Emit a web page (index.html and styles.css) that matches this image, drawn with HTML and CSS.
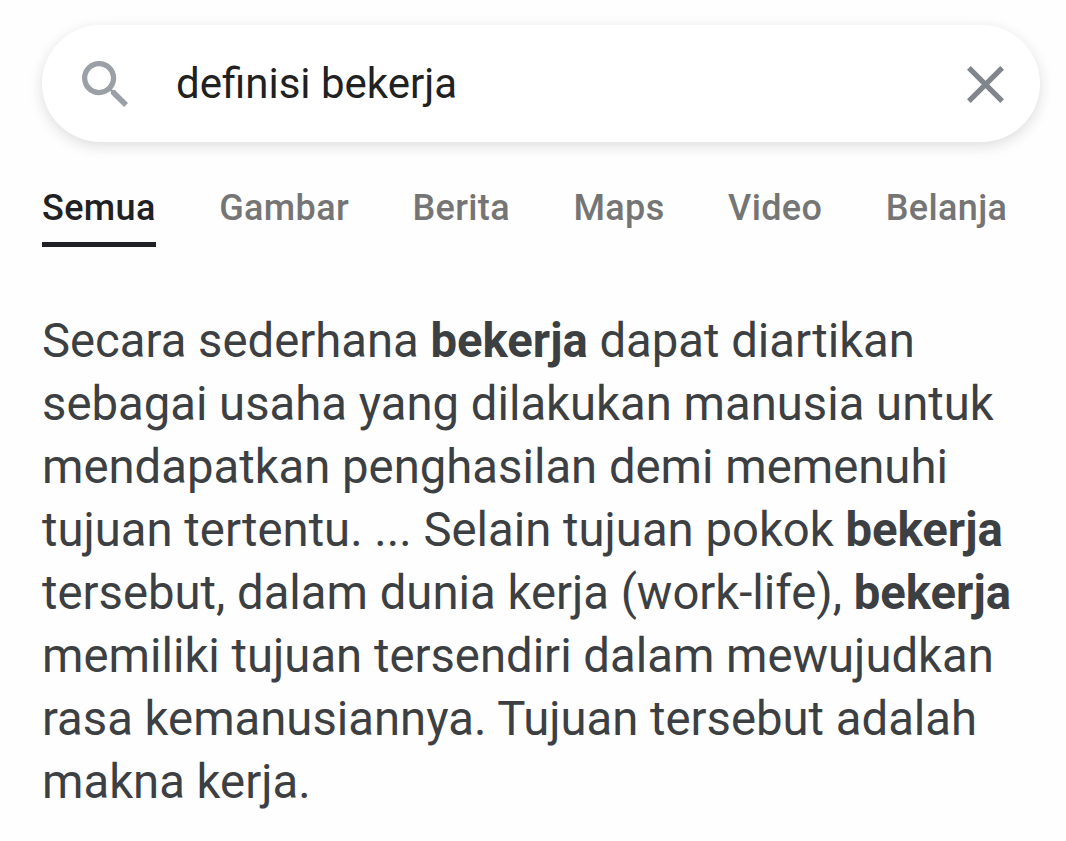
FILE: index.html
```html
<!DOCTYPE html>
<html lang="id">
<head>
    <meta charset="UTF-8">
    <title>definisi bekerja</title>
    <link rel="stylesheet" href="styles.css">
</head>
<body>
    <form class="search-box">
        <svg class="search-icon" viewBox="3 3 17.49 17.49">
            <path d="M15.5 14h-.79l-.28-.27A6.471 6.471 0 0 0 16 9.5 6.5 6.5 0 1 0 9.5 16c1.61 0 3.09-.59 4.23-1.57l.27.28v.79l5 4.99L20.49 19l-4.99-5zm-6 0C7.01 14 5 11.99 5 9.5S7.01 5 9.5 5 14 7.01 14 9.5 11.99 14 9.5 14z"/>
        </svg>
        <span class="query">definisi bekerja</span>
        <svg class="clear-icon" viewBox="5 5 14 14">
            <path d="M19 6.41L17.59 5 12 10.59 6.41 5 5 6.41 10.59 12 5 17.59 6.41 19 12 13.41 17.59 19 19 17.59 13.41 12z"/>
        </svg>
    </form>

    <nav class="tabs">
        <a class="tab active">Semua</a>
        <a class="tab">Gambar</a>
        <a class="tab">Berita</a>
        <a class="tab">Maps</a>
        <a class="tab">Video</a>
        <a class="tab">Belanja</a>
    </nav>

    <p class="snippet">
        Secara sederhana <b>bekerja</b> dapat diartikan<br>
        sebagai usaha yang dilakukan manusia untuk<br>
        mendapatkan penghasilan demi memenuhi<br>
        tujuan tertentu. ... Selain tujuan pokok <b>bekerja</b><br>
        tersebut, dalam dunia kerja (work-life), <b>bekerja</b><br>
        memiliki tujuan tersendiri dalam mewujudkan<br>
        rasa kemanusiannya. Tujuan tersebut adalah<br>
        makna kerja.
    </p>
</body>
</html>
```
FILE: styles.css
```css
* {
    box-sizing: border-box;
}

body {
    margin: 0;
    padding: 25px 26px 0 42px;
    background: #fefefe;
    font-family: Roboto, sans-serif;
    overflow: hidden;
}

.search-box {
    display: flex;
    align-items: center;
    height: 117px;
    padding: 0 36px 0 40px;
    border-radius: 59px;
    background: #fff;
    box-shadow: 0 4px 14px rgba(32, 33, 36, 0.15);
}

.search-icon {
    width: 46px;
    height: 46px;
    fill: #9aa0a6;
}

.query {
    flex: 1;
    margin-left: 48px;
    padding-bottom: 1px;
    font-size: 42px;
    color: #212121;
}

.clear-icon {
    width: 37px;
    height: 37px;
    margin-top: 1px;
    fill: #80868b;
}

.tabs {
    display: flex;
    gap: 63.5px;
    margin-top: 33px;
}

.tab {
    height: 72px;
    line-height: 66px;
    font-size: 36px;
    font-weight: 500;
    letter-spacing: 0.36px;
    color: #757575;
    white-space: nowrap;
}

.active {
    color: #202124;
    border-bottom: 5px solid #202124;
}

.snippet {
    margin: 63px 0 0;
    font-size: 47.25px;
    line-height: 63px;
    color: #3c4043;
    white-space: nowrap;
}
```
